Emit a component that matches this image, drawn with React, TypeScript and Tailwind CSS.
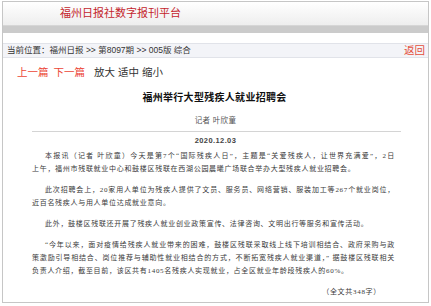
const sans = "font-['Liberation_Sans','Noto_Sans_CJK_SC',sans-serif]";
const serif = "font-['Liberation_Serif','Noto_Sans_CJK_SC',serif]";

// full lines are stretched edge to edge, last lines sit left
const paragraphs: { lines: string[] }[] = [
  {
    lines: [
      "本报讯（记者 叶欣童）今天是第7个“国际残疾人日”，主题是“关爱残疾人，让世界充满爱”，2日",
      "上午，福州市残联就业中心和鼓楼区残联在西湖公园晨曦广场联合举办大型残疾人就业招聘会。",
    ],
  },
  {
    lines: [
      "此次招聘会上，20家用人单位为残疾人提供了文员、服务员、网络营销、服装加工等267个就业岗位，",
      "近百名残疾人与用人单位达成就业意向。",
    ],
  },
  {
    lines: ["此外，鼓楼区残联还开展了残疾人就业创业政策宣传、法律咨询、文明出行等服务和宣传活动。"],
  },
  {
    lines: [
      "“今年以来，面对疫情给残疾人就业带来的困难，鼓楼区残联采取线上线下培训相结合、政府采购与政",
      "策激励引导相结合、岗位推荐与辅助性就业相结合的方式，不断拓宽残疾人就业渠道，” 据鼓楼区残联相关",
      "负责人介绍，截至目前，该区共有1405名残疾人实现就业，占全区就业年龄段残疾人的60%。",
    ],
  },
];

export default function App() {
  return (
    <div lang="zh-CN" className={`w-[431px] h-[306px] bg-white pt-[1px] px-[2px] ${sans}`}>
      <div className="h-[302px] border border-[#c6c6c6] flex flex-col">
        {/* header */}
        <header className="h-[23px] bg-gradient-to-b from-white to-[#eeeeee] pl-[57px]">
          <h1 className="text-[11px] leading-[23px] text-[#c4262d]">福州日报社数字报刊平台</h1>
        </header>
        <div className="h-[8px] bg-[#cbcbcb] border-t border-[#d6d6d6]" />
        <div className="h-[10px] bg-white" />

        {/* breadcrumb */}
        <div className="h-[15px] bg-[#f3f4f8] border-t border-[#e1e3e9] border-b border-[#cdd0d7] flex items-center justify-between pl-[4px] pr-[3px]">
          <p className="text-[8.5px] leading-[13px] text-[#333] whitespace-pre">当前位置：福州日报 {">>"} 第8097期 {">>"} 005版 综合</p>
          <a className="text-[10.5px] leading-[13px] text-[#e4503b]">返回</a>
        </div>

        {/* article */}
        <main className="flex-1 flex flex-col">
          <div className="pt-[9px] pl-[14px] flex items-center text-[10.5px] leading-[10px]">
            <span className="text-[#ec4636]">上一篇</span>
            <span className="ml-[5px] text-[#ec4636]">下一篇</span>
            <span className="ml-[9px] text-[#333]">放大</span>
            <span className="ml-[3px] text-[#333]">适中</span>
            <span className="ml-[3px] text-[#333]">缩小</span>
          </div>

          <h2 className="mt-[15px] text-center text-[10px] leading-[12px] font-bold text-[#111] tracking-[0.3px] pr-[2px]">
            福州举行大型残疾人就业招聘会
          </h2>
          <p className="mt-[12px] text-center text-[7.5px] leading-[10px] text-[#555] tracking-[0.3px]">记者 叶欣童</p>
          <div className="mt-[5px] mx-[29px] mr-[27px] h-px bg-[#d4d4d4]" />
          <p className="mt-[4px] text-center text-[7.5px] leading-[9px] font-semibold text-[#444] tracking-[0.4px]">2020.12.03</p>

          <div className={`mt-[5px] pl-[29px] pr-[33px] text-[7px] leading-[13px] text-[#3a3a3a] tracking-[0.7px] ${serif}`}>
            {paragraphs.map((p, i) => (
              <div key={i} className={i > 0 ? "mt-[8px]" : ""}>
                {p.lines.map((line, j) => {
                  const last = j === p.lines.length - 1;
                  return (
                    <div
                      key={j}
                      className={`whitespace-nowrap ${j === 0 ? "indent-[13px]" : ""} ${
                        last ? "" : "text-justify [text-align-last:justify]"
                      }`}
                    >
                      {line}
                    </div>
                  );
                })}
              </div>
            ))}
            <p className="mt-[8px] text-right pr-[14px]">（全文共348字）</p>
          </div>
        </main>
      </div>
    </div>
  );
}
